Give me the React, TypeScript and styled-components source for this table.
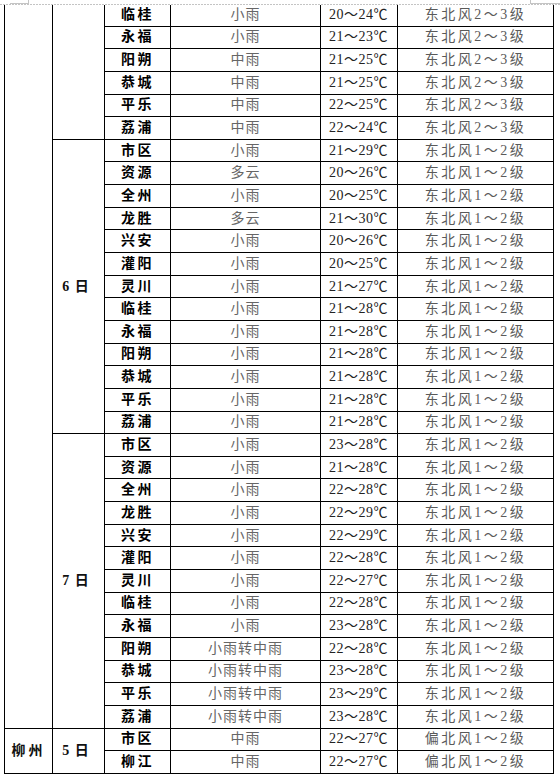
import React from "react";
import styled, { createGlobalStyle, css } from "styled-components";

type Kind = "city" | "date" | "district" | "weather" | "temp" | "wind";

const Global = createGlobalStyle`
  html, body { margin: 0; padding: 0; background: #ffffff; }
  body { font-family: "Liberation Serif", "Noto Sans CJK SC", serif; }
`;

const Page = styled.div`
  width: 560px;
  height: 780px;
  overflow: hidden;
  background: #ffffff;
`;

const Edge = styled.div`
  position: relative;
  height: 5px;
  background: repeating-linear-gradient(to right, #c4c4c4 0 2px, transparent 2px 3px) left bottom / 100% 1px no-repeat;
`;

const CornerMark = styled.div<{ $side: "left" | "right" }>`
  position: absolute;
  top: 0;
  height: 3px;
  border-bottom: 1px solid #c4c4c4;
  ${(p) =>
    p.$side === "left"
      ? css`left: 10px; width: 18px; border-right: 1px solid #c4c4c4;`
      : css`left: 530px; width: 30px; border-left: 1px solid #c4c4c4;`}
`;

const Grid = styled.div`
  display: grid;
  margin-left: 4px;
  width: 550px;
  box-sizing: border-box;
  border-left: 1px solid #000;
  grid-template-columns: 48px 52px 66px 150px 77px 156px;
  grid-template-rows: 21.65px repeat(33, 22.65px);
`;

const kindStyles: Record<Kind, ReturnType<typeof css>> = {
  city: css`font-weight: 700; letter-spacing: 3px; color: #111;`,
  date: css`font-weight: 700; letter-spacing: 1px; color: #111; padding-right: 5px;`,
  district: css`font-weight: 700; letter-spacing: 2.5px; color: #000;`,
  weather: css`letter-spacing: 1px; color: #666;`,
  temp: css`letter-spacing: 0.5px; color: #222; padding-right: 1px;`,
  wind: css`letter-spacing: 2.5px; color: #5a5a5a;`,
};

const Cell = styled.div<{ $row: number; $span?: number; $col: number; $kind: Kind }>`
  box-sizing: border-box;
  display: flex;
  align-items: center;
  justify-content: center;
  border-right: 1px solid #000;
  border-bottom: 1px solid #000;
  grid-column: ${(p) => p.$col};
  grid-row: ${(p) => `${p.$row} / span ${p.$span ?? 1}`};
  font-size: 14px;
  line-height: 1;
  white-space: nowrap;
  ${(p) => kindStyles[p.$kind]}
`;

type Row = [string, string, string, string];

const w23 = "东北风2～3级";
const w12 = "东北风1～2级";

const groupA: Row[] = [
  ["临桂", "小雨", "20～24℃", w23],
  ["永福", "小雨", "21～23℃", w23],
  ["阳朔", "中雨", "21～25℃", w23],
  ["恭城", "中雨", "21～25℃", w23],
  ["平乐", "中雨", "22～25℃", w23],
  ["荔浦", "中雨", "22～24℃", w23],
];

const day6: Row[] = [
  ["市区", "小雨", "21～29℃", w12],
  ["资源", "多云", "20～26℃", w12],
  ["全州", "小雨", "20～25℃", w12],
  ["龙胜", "多云", "21～30℃", w12],
  ["兴安", "小雨", "20～26℃", w12],
  ["灌阳", "小雨", "20～25℃", w12],
  ["灵川", "小雨", "21～27℃", w12],
  ["临桂", "小雨", "21～28℃", w12],
  ["永福", "小雨", "21～28℃", w12],
  ["阳朔", "小雨", "21～28℃", w12],
  ["恭城", "小雨", "21～28℃", w12],
  ["平乐", "小雨", "21～28℃", w12],
  ["荔浦", "小雨", "21～28℃", w12],
];

const day7: Row[] = [
  ["市区", "小雨", "23～28℃", w12],
  ["资源", "小雨", "21～28℃", w12],
  ["全州", "小雨", "22～28℃", w12],
  ["龙胜", "小雨", "22～29℃", w12],
  ["兴安", "小雨", "22～29℃", w12],
  ["灌阳", "小雨", "22～28℃", w12],
  ["灵川", "小雨", "22～27℃", w12],
  ["临桂", "小雨", "22～28℃", w12],
  ["永福", "小雨", "23～28℃", w12],
  ["阳朔", "小雨转中雨", "22～28℃", w12],
  ["恭城", "小雨转中雨", "23～28℃", w12],
  ["平乐", "小雨转中雨", "23～29℃", w12],
  ["荔浦", "小雨转中雨", "23～28℃", w12],
];

const liuzhou: Row[] = [
  ["市区", "中雨", "22～27℃", "偏北风1～2级"],
  ["柳江", "中雨", "22～27℃", "偏北风1～2级"],
];

const allRows: Row[] = [...groupA, ...day6, ...day7, ...liuzhou];

const dateGroups = [
  { label: "", start: 1, span: 6 },
  { label: "6 日", start: 7, span: 13 },
  { label: "7 日", start: 20, span: 13 },
  { label: "5 日", start: 33, span: 2 },
];

const cityGroups = [
  { label: "", start: 1, span: 32 },
  { label: "柳州", start: 33, span: 2 },
];

export default function App() {
  return (
    <Page>
      <Global />
      <Edge>
        <CornerMark $side="left" />
        <CornerMark $side="right" />
      </Edge>
      <Grid>
        {cityGroups.map((g) => (
          <Cell key={`c${g.start}`} $col={1} $row={g.start} $span={g.span} $kind="city">
            {g.label}
          </Cell>
        ))}
        {dateGroups.map((g) => (
          <Cell key={`d${g.start}`} $col={2} $row={g.start} $span={g.span} $kind="date">
            {g.label}
          </Cell>
        ))}
        {allRows.map((r, i) => (
          <React.Fragment key={i}>
            <Cell $col={3} $row={i + 1} $kind="district">{r[0]}</Cell>
            <Cell $col={4} $row={i + 1} $kind="weather">{r[1]}</Cell>
            <Cell $col={5} $row={i + 1} $kind="temp">{r[2]}</Cell>
            <Cell $col={6} $row={i + 1} $kind="wind">{r[3]}</Cell>
          </React.Fragment>
        ))}
      </Grid>
    </Page>
  );
}
